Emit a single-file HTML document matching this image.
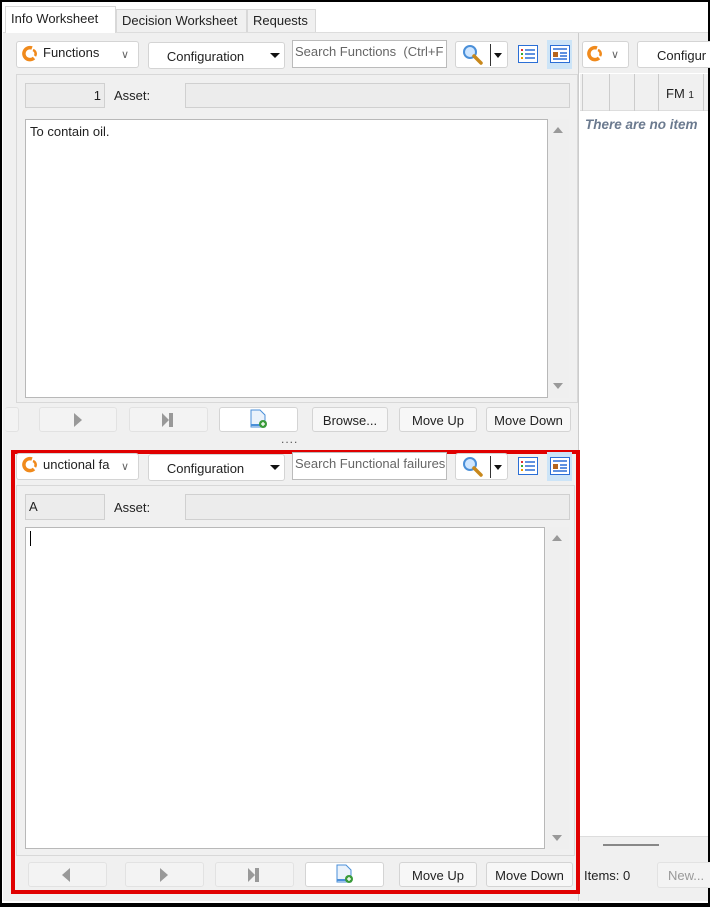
<!DOCTYPE html>
<html><head><meta charset="utf-8"><style>
*{box-sizing:border-box;margin:0;padding:0}
body{width:710px;height:907px;overflow:hidden;background:#000;font-family:"Liberation Sans",sans-serif;font-size:13px;color:#222;position:relative}
.a{position:absolute}
.win{left:2px;top:2px;width:706px;height:901px;background:#fff}
.bg{background:#f0f0f0}
.tab{top:9px;height:23px;border:1px solid #d8d8d8;border-bottom:none;background:#f0f0f0;font-size:13px;padding:3px 5px 0}
.btn{border:1px solid #d4d4d4;border-radius:3px;background:#f7f7f7;text-align:center;font-size:13px;line-height:25px}
.btn.w{background:#fff}
.dis{border:1px solid #e2e2e2;border-radius:3px;background:#f3f3f3}
.fld{background:#ececec;border:1px solid #d0d0d0}
.ta{background:#fff;border:1px solid #b8b8b8}
.sb{background:#efefef}
.tri{width:0;height:0}
</style></head><body>
<div class="a win"></div>
<div class="a bg" style="left:3px;top:33px;width:575px;height:868px"></div>
<div class="a" style="left:3px;top:32px;width:705px;height:1px;background:#ddd"></div>
<div class="a tab" style="left:5px;top:6px;height:27px;width:111px;background:#fff;padding-top:4px">Info Worksheet</div>
<div class="a tab" style="left:116px;width:131px">Decision Worksheet</div>
<div class="a tab" style="left:247px;width:69px">Requests</div>

<div class="a" style="left:578px;top:33px;width:130px;height:868px;background:#fff;border-left:1px solid #ccc"></div>
<div class="a bg" style="left:579px;top:33px;width:129px;height:40px"></div>
<div class="a btn w" style="left:582px;top:41px;width:47px;height:27px"></div>
<svg class="a" style="left:585px;top:45px" width="20" height="18" viewBox="0 0 20 18"><path d="M12 3 A6 6 0 1 0 14 13" fill="none" stroke="#f08a1c" stroke-width="3.5"/><path d="M13 5 A4 4 0 0 1 15 11" fill="none" stroke="#f08a1c" stroke-width="2.5"/></svg>
<div class="a" style="left:611px;top:48px;font-size:11px;color:#666">&#x2228;</div>
<div class="a btn w" style="left:637px;top:41px;width:80px;height:27px;text-align:left;padding-left:19px;line-height:28px">Configur</div>
<div class="a" style="left:580px;top:74px;width:128px;height:37px;background:#f0f0f0;border-bottom:1px solid #ddd"></div>
<div class="a" style="left:582px;top:74px;width:1px;height:37px;background:#ccc"></div>
<div class="a" style="left:609px;top:74px;width:1px;height:37px;background:#ccc"></div>
<div class="a" style="left:634px;top:74px;width:1px;height:37px;background:#ccc"></div>
<div class="a" style="left:658px;top:74px;width:1px;height:37px;background:#ccc"></div>
<div class="a" style="left:703px;top:74px;width:1px;height:37px;background:#ccc"></div>
<div class="a" style="left:666px;top:86px;font-size:13px">FM <span style="font-size:10px">1</span></div>
<div class="a" style="left:585px;top:117px;font-size:13.5px;font-style:italic;font-weight:bold;color:#6b7a8f;white-space:nowrap">There are no item</div>
<div class="a bg" style="left:579px;top:836px;width:129px;height:65px;border-top:1px solid #ddd"></div>
<div class="a" style="left:603px;top:844px;width:56px;height:2px;background:#888"></div>
<div class="a" style="left:584px;top:868px">Items: 0</div>
<div class="a dis" style="left:657px;top:862px;width:60px;height:26px;padding:5px 0 0 10px;color:#999">New...</div>

<div class="a btn w" style="left:16px;top:41px;width:123px;height:27px"></div>
<svg class="a" style="left:20px;top:45px" width="20" height="18" viewBox="0 0 20 18"><path d="M12 3 A6 6 0 1 0 14 13" fill="none" stroke="#f08a1c" stroke-width="3.5"/><path d="M13 5 A4 4 0 0 1 15 11" fill="none" stroke="#f08a1c" stroke-width="2.5"/></svg>
<div class="a" style="left:43px;top:45px">Functions</div>
<div class="a" style="left:121px;top:48px;font-size:11px;color:#666">&#x2228;</div>
<div class="a btn w" style="left:148px;top:42px;width:137px;height:27px;line-height:27px;padding-right:22px">Configuration</div>
<div class="a tri" style="left:270px;top:53px;border-left:5px solid transparent;border-right:5px solid transparent;border-top:5px solid #111"></div>
<div class="a" style="left:292px;top:40px;width:155px;height:28px;background:#fff;border:1px solid #bbb;padding:3px 2px;color:#666;white-space:nowrap;overflow:hidden">Search Functions&nbsp; (Ctrl+F</div>
<div class="a btn w" style="left:455px;top:41px;width:53px;height:27px"></div>
<div class="a" style="left:490px;top:44px;width:1px;height:22px;background:#333"></div>
<svg class="a" style="left:461px;top:43px" width="24" height="24" viewBox="0 0 24 24"><circle cx="9" cy="9" r="6" fill="#cfe6ff" stroke="#4a8fd8" stroke-width="2"/><path d="M13 13 L20 20" stroke="#c8881c" stroke-width="3.5" stroke-linecap="round"/></svg>
<div class="a tri" style="left:494px;top:53px;border-left:4px solid transparent;border-right:4px solid transparent;border-top:5px solid #111"></div>
<svg class="a" style="left:518px;top:45px" width="20" height="18" viewBox="0 0 20 18"><rect x="0.5" y="0.5" width="19" height="17" fill="#fff" stroke="#2b6fd6"/><rect x="3" y="4" width="2" height="2" fill="#d33"/><rect x="3" y="8" width="2" height="2" fill="#3a3"/><rect x="3" y="12" width="2" height="2" fill="#e90"/><path d="M7 5h10M7 9h10M7 13h10" stroke="#2b6fd6" stroke-width="1.5"/></svg>
<div class="a" style="left:547px;top:40px;width:25px;height:29px;background:#cce4f7"></div>
<svg class="a" style="left:550px;top:45px" width="20" height="18" viewBox="0 0 20 18"><rect x="0.5" y="0.5" width="19" height="17" fill="#fff" stroke="#2b6fd6"/><rect x="3" y="7" width="5" height="5" fill="#b5651d"/><path d="M3 4h14M10 8h7M10 11h7M3 14h14" stroke="#2b6fd6" stroke-width="1.5"/></svg>

<div class="a" style="left:16px;top:74px;width:562px;height:329px;border:1px solid #d8d8d8"></div>
<div class="a fld" style="left:25px;top:83px;width:80px;height:25px;text-align:right;padding:4px 3px 0 0">1</div>
<div class="a" style="left:114px;top:88px">Asset:</div>
<div class="a fld" style="left:185px;top:83px;width:385px;height:25px"></div>
<div class="a ta" style="left:25px;top:119px;width:523px;height:279px;padding:4px 4px">To contain oil.</div>
<div class="a sb" style="left:548px;top:119px;width:21px;height:279px"></div>
<div class="a tri" style="left:553px;top:127px;border-left:5px solid transparent;border-right:5px solid transparent;border-bottom:6px solid #999"></div>
<div class="a tri" style="left:553px;top:383px;border-left:5px solid transparent;border-right:5px solid transparent;border-top:6px solid #999"></div>
<div class="a dis" style="left:5px;top:407px;width:14px;height:25px;border-left:none"></div>
<div class="a dis" style="left:39px;top:407px;width:78px;height:25px"></div>
<div class="a tri" style="left:74px;top:413px;border-top:7px solid transparent;border-bottom:7px solid transparent;border-left:8px solid #999"></div>
<div class="a dis" style="left:129px;top:407px;width:79px;height:25px"></div>
<div class="a tri" style="left:162px;top:413px;border-top:7px solid transparent;border-bottom:7px solid transparent;border-left:7px solid #999"></div>
<div class="a" style="left:169px;top:413px;width:4px;height:14px;background:#999"></div>
<div class="a btn w" style="left:219px;top:407px;width:79px;height:25px"></div>
<svg class="a" style="left:249px;top:409px" width="20" height="20" viewBox="0 0 20 20"><path d="M2 1h9l5 5v12H2z" fill="#eaf2fb" stroke="#4a8fd8"/><path d="M2 16h10" stroke="#4a8fd8" stroke-width="2"/><circle cx="14" cy="15" r="4" fill="#3a9b3a"/><path d="M12 15h4M14 13v4" stroke="#fff" stroke-width="1.3"/></svg>
<div class="a btn" style="left:312px;top:407px;width:76px;height:25px">Browse...</div>
<div class="a btn" style="left:399px;top:407px;width:78px;height:25px">Move Up</div>
<div class="a btn" style="left:486px;top:407px;width:85px;height:25px">Move Down</div>
<div class="a" style="left:281px;top:432px;font-size:12px;letter-spacing:1px;color:#555">....</div>

<div class="a" style="left:11px;top:450px;width:569px;height:444px;border:4px solid #e00000"></div>
<div class="a btn w" style="left:16px;top:453px;width:123px;height:27px"></div>
<svg class="a" style="left:20px;top:456px" width="20" height="18" viewBox="0 0 20 18"><path d="M12 3 A6 6 0 1 0 14 13" fill="none" stroke="#f08a1c" stroke-width="3.5"/><path d="M13 5 A4 4 0 0 1 15 11" fill="none" stroke="#f08a1c" stroke-width="2.5"/></svg>
<div class="a" style="left:43px;top:457px">unctional fa</div>
<div class="a" style="left:121px;top:460px;font-size:11px;color:#666">&#x2228;</div>
<div class="a btn w" style="left:148px;top:454px;width:137px;height:27px;line-height:27px;padding-right:22px">Configuration</div>
<div class="a tri" style="left:270px;top:465px;border-left:5px solid transparent;border-right:5px solid transparent;border-top:5px solid #111"></div>
<div class="a" style="left:292px;top:452px;width:155px;height:28px;background:#fff;border:1px solid #bbb;padding:3px 2px;color:#666;white-space:nowrap;overflow:hidden">Search Functional failures</div>
<div class="a btn w" style="left:455px;top:453px;width:53px;height:27px"></div>
<div class="a" style="left:490px;top:456px;width:1px;height:22px;background:#333"></div>
<svg class="a" style="left:461px;top:455px" width="24" height="24" viewBox="0 0 24 24"><circle cx="9" cy="9" r="6" fill="#cfe6ff" stroke="#4a8fd8" stroke-width="2"/><path d="M13 13 L20 20" stroke="#c8881c" stroke-width="3.5" stroke-linecap="round"/></svg>
<div class="a tri" style="left:494px;top:465px;border-left:4px solid transparent;border-right:4px solid transparent;border-top:5px solid #111"></div>
<svg class="a" style="left:518px;top:457px" width="20" height="18" viewBox="0 0 20 18"><rect x="0.5" y="0.5" width="19" height="17" fill="#fff" stroke="#2b6fd6"/><rect x="3" y="4" width="2" height="2" fill="#d33"/><rect x="3" y="8" width="2" height="2" fill="#3a3"/><rect x="3" y="12" width="2" height="2" fill="#e90"/><path d="M7 5h10M7 9h10M7 13h10" stroke="#2b6fd6" stroke-width="1.5"/></svg>
<div class="a" style="left:547px;top:452px;width:25px;height:29px;background:#cce4f7"></div>
<svg class="a" style="left:550px;top:457px" width="20" height="18" viewBox="0 0 20 18"><rect x="0.5" y="0.5" width="19" height="17" fill="#fff" stroke="#2b6fd6"/><rect x="3" y="7" width="5" height="5" fill="#b5651d"/><path d="M3 4h14M10 8h7M10 11h7M3 14h14" stroke="#2b6fd6" stroke-width="1.5"/></svg>

<div class="a" style="left:16px;top:485px;width:559px;height:371px;border:1px solid #d8d8d8"></div>
<div class="a fld" style="left:25px;top:494px;width:80px;height:26px;padding:4px 0 0 3px">A</div>
<div class="a" style="left:114px;top:500px">Asset:</div>
<div class="a fld" style="left:185px;top:494px;width:385px;height:26px"></div>
<div class="a ta" style="left:25px;top:527px;width:520px;height:322px"></div>
<div class="a" style="left:30px;top:531px;width:1px;height:15px;background:#000"></div>
<div class="a sb" style="left:546px;top:527px;width:23px;height:322px"></div>
<div class="a tri" style="left:552px;top:535px;border-left:5px solid transparent;border-right:5px solid transparent;border-bottom:6px solid #999"></div>
<div class="a tri" style="left:552px;top:835px;border-left:5px solid transparent;border-right:5px solid transparent;border-top:6px solid #999"></div>
<div class="a dis" style="left:28px;top:862px;width:79px;height:25px"></div>
<div class="a tri" style="left:62px;top:868px;border-top:7px solid transparent;border-bottom:7px solid transparent;border-right:8px solid #999"></div>
<div class="a dis" style="left:125px;top:862px;width:79px;height:25px"></div>
<div class="a tri" style="left:160px;top:868px;border-top:7px solid transparent;border-bottom:7px solid transparent;border-left:8px solid #999"></div>
<div class="a dis" style="left:215px;top:862px;width:79px;height:25px"></div>
<div class="a tri" style="left:248px;top:868px;border-top:7px solid transparent;border-bottom:7px solid transparent;border-left:7px solid #999"></div>
<div class="a" style="left:255px;top:868px;width:4px;height:14px;background:#999"></div>
<div class="a btn w" style="left:305px;top:862px;width:79px;height:25px"></div>
<svg class="a" style="left:335px;top:864px" width="20" height="20" viewBox="0 0 20 20"><path d="M2 1h9l5 5v12H2z" fill="#eaf2fb" stroke="#4a8fd8"/><path d="M2 16h10" stroke="#4a8fd8" stroke-width="2"/><circle cx="14" cy="15" r="4" fill="#3a9b3a"/><path d="M12 15h4M14 13v4" stroke="#fff" stroke-width="1.3"/></svg>
<div class="a btn" style="left:399px;top:862px;width:78px;height:25px">Move Up</div>
<div class="a btn" style="left:486px;top:862px;width:87px;height:25px">Move Down</div>
</body></html>
